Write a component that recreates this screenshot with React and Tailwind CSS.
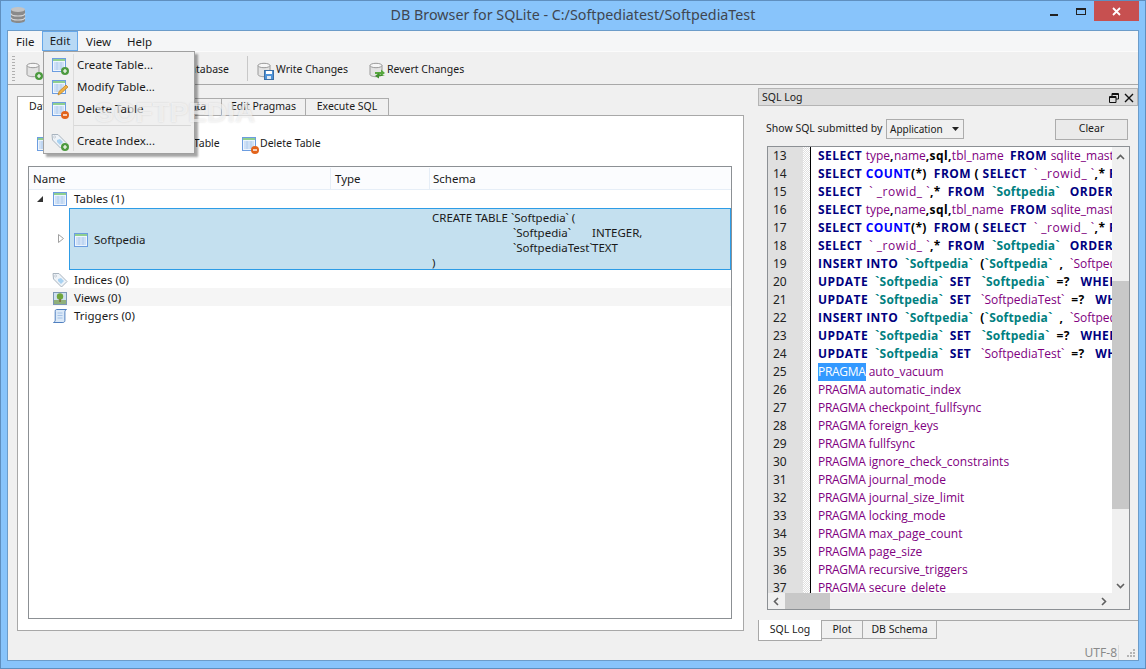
import React from 'react';

const ui = "font-['Noto_Sans','Open_Sans',sans-serif]";

function TableIcon({ className = 'w-4 h-4' }) {
  return (
    <svg viewBox="0 0 16 16" className={className}>
      <rect x="1.5" y="1.5" width="13" height="13" fill="#eef5fd" stroke="#6c9de0" />
      <rect x="2" y="2" width="12" height="2" fill="#8fcf8f" />
      <path d="M3 6h10M3 8h10M3 10h10M3 12h10M6 5v8M10 5v8" stroke="#b0ccee" strokeWidth="1" fill="none" />
    </svg>
  );
}

function PlusBadge() {
  return (
    <svg viewBox="0 0 8 8" className="absolute -right-[2px] -bottom-[2px] w-2 h-2">
      <circle cx="4" cy="4" r="4" fill="#4c9a3f" />
      <path d="M2 4h4M4 2v4" stroke="#fff" strokeWidth="1.2" />
    </svg>
  );
}

function MinusBadge() {
  return (
    <svg viewBox="0 0 8 8" className="absolute -right-[2px] -bottom-[2px] w-2 h-2">
      <circle cx="4" cy="4" r="4" fill="#e2641c" />
      <path d="M2 4h4" stroke="#fff" strokeWidth="1.4" />
    </svg>
  );
}

function DbIcon({ className = 'w-4 h-4' }) {
  return (
    <svg viewBox="0 0 16 16" className={className}>
      <path d="M2 3.5v9c0 1.2 2.7 2.2 6 2.2s6-1 6-2.2v-9z" fill="#e3e3e3" stroke="#9a9a9a" />
      <ellipse cx="8" cy="3.5" rx="6" ry="2.2" fill="#f6f6f6" stroke="#9a9a9a" />
    </svg>
  );
}

function AppIcon() {
  return (
    <svg viewBox="0 0 16 16" className="absolute left-[9px] top-[6px] w-4 h-4">
      <path d="M1 2.5v11C1 15 4 16 8 16s7-1 7-2.5v-11z" fill="#8a8a8a" />
      <ellipse cx="8" cy="2.5" rx="7" ry="2.5" fill="#c4c4c4" />
      <path d="M1 6.5C1 8 4 9 8 9s7-1 7-2.5M1 10.5C1 12 4 13 8 13s7-1 7-2.5" fill="none" stroke="#d8d8d8" strokeWidth="1.2" />
    </svg>
  );
}

function TagIcon() {
  return (
    <svg viewBox="0 0 16 16" className="w-4 h-4">
      <path d="M1 1.5h6l8 8-5.5 5.5-8-8z" fill="#eef3f8" stroke="#a9b4bf" />
      <path d="M6 7l3-1 3 3-3 3-3-3z" fill="#a8d2f2" />
      <circle cx="3.6" cy="4" r="1" fill="#fff" stroke="#a9b4bf" strokeWidth="0.6" />
    </svg>
  );
}

function ViewIcon() {
  return (
    <svg viewBox="0 0 16 16" className="w-4 h-4">
      <rect x="1.5" y="2.5" width="13" height="12" fill="#cfe0ef" stroke="#7c97b5" />
      <rect x="2" y="10" width="12" height="4" fill="#8fb07a" />
      <circle cx="8" cy="6.5" r="3.2" fill="#6fa53c" />
      <rect x="7.4" y="9" width="1.3" height="3" fill="#7a5a34" />
    </svg>
  );
}

function TriggerIcon() {
  return (
    <svg viewBox="0 0 16 16" className="w-4 h-4">
      <path d="M4.5 1.5h10c-1.2 .6-1.6 1.6-1.6 2.6v8.4c0 1.2-.8 2-2 2H1.5c1.2-.5 1.7-1.2 1.7-2.4V3.4c0-1.2.4-1.9 1.3-1.9z" fill="#dbe9f8" stroke="#4f7fbf" />
      <path d="M5.5 5h5M5.5 7.5h5M5.5 10h5" stroke="#a5c2e6" />
    </svg>
  );
}

function Chevron({ d }) {
  return (
    <svg viewBox="0 0 9 9" className="w-[9px] h-[9px]">
      <path d={d} stroke="#606060" strokeWidth="1.6" fill="none" />
    </svg>
  );
}

// code segments: k keyword, f function, p punctuation, i identifier, r rowid, t quoted table
const kinds = {
  k: 'font-bold tracking-[0.45px] text-[#000080]',
  f: 'font-bold tracking-[0.45px] text-[#0000ff]',
  p: 'font-bold tracking-[0.4px] text-black',
  i: 'text-[#800080]',
  r: 'tracking-[0.5px] text-[#800080]',
  t: 'font-bold tracking-[0.2px] text-[#008080]',
};

const sel1 = [['k', 'SELECT '], ['i', 'type'], ['p', ','], ['i', 'name'], ['p', ',sql,'], ['i', 'tbl_name  '], ['k', 'FROM '], ['i', 'sqlite_master']];
const sel2 = [['k', 'SELECT '], ['f', 'COUNT'], ['p', '(*)  '], ['k', 'FROM '], ['p', '( '], ['k', 'SELECT '], ['r', ' ` _rowid_ `'], ['p', ',* '], ['k', 'FROM']];
const sel3 = [['k', 'SELECT '], ['r', ' ` _rowid_ `'], ['p', ',*  '], ['k', 'FROM '], ['t', ' `Softpedia`   '], ['k', 'ORDER BY']];
const ins = [['k', 'INSERT INTO '], ['t', ' `Softpedia`'], ['p', '  ('], ['t', '`Softpedia`'], ['p', '  , '], ['i', ' `SoftpediaTest`']];
const upd1 = [['k', 'UPDATE '], ['t', ' `Softpedia`  '], ['k', 'SET '], ['t', '  `Softpedia`'], ['p', '  =?   '], ['k', 'WHERE']];
const upd2 = [['k', 'UPDATE '], ['t', ' `Softpedia`  '], ['k', 'SET '], ['i', '  `SoftpediaTest`'], ['p', '  =?   '], ['k', 'WHERE']];

const pragmas = [
  'auto_vacuum', 'automatic_index', 'checkpoint_fullfsync', 'foreign_keys', 'fullfsync',
  'ignore_check_constraints', 'journal_mode', 'journal_size_limit', 'locking_mode',
  'max_page_count', 'page_size', 'recursive_triggers', 'secure_delete',
];

const codeLines = [sel1, sel2, sel3, sel1, sel2, sel3, ins, upd1, upd2, ins, upd1, upd2];

function CodeLine({ number, children }) {
  return (
    <div className="flex h-[18px] leading-[18px] shrink-0">
      <div className={`w-[35px] bg-[#e0e0e0] pl-[5px] text-[12px] text-[#222] ${ui}`}>{number}</div>
      <div className="w-[7px] bg-[repeating-conic-gradient(#e0e0e0_0_25%,#ffffff_0_50%)] bg-[length:2px_2px]" />
      <div className="w-px bg-black" />
      <div className="w-[7px]" />
      <div className="flex-1 min-w-0 overflow-hidden whitespace-pre">{children}</div>
    </div>
  );
}

function MenuItem({ icon, label }) {
  return (
    <div className="flex h-[22px] items-center">
      <div className="w-[30px] flex justify-center">{icon}</div>
      <div className="pl-[3px]">{label}</div>
    </div>
  );
}

function SideTab({ label, className }) {
  return (
    <div className={`flex items-center justify-center whitespace-nowrap border border-[#acacac] bg-[#f0f0f0] text-[10.5px] ${className}`}>{label}</div>
  );
}

function TreeRow({ icon, label, className = '' }) {
  return (
    <div className={`flex h-[18px] items-center pl-[23px] ${className}`}>
      {icon}
      <span className="ml-[6px]">{label}</span>
    </div>
  );
}

export default function App() {
  return (
    <div className={`relative w-[1146px] h-[669px] overflow-hidden flex flex-col bg-[#88c4fb] border border-[#5f8fbf] text-[11.5px] text-[#1a1a1a] ${ui}`}>
      {/* title bar */}
      <div className="h-[29px] shrink-0 relative flex items-center justify-center">
        <AppIcon />
        <span className="text-[14.3px] text-[#3f4650] -mt-[1px]">DB Browser for SQLite - C:/Softpediatest/SoftpediaTest</span>
        <div className="absolute right-[6px] top-0 flex items-start">
          <div className="w-[8px] h-[2px] bg-[#222] mt-[13px] mr-[18px]" />
          <div className="w-[10px] h-[7px] border border-[#222] border-t-2 mt-[7px] mr-[8px]" />
          <div className="w-[45px] h-[20px] bg-[#c75050] flex items-center justify-center">
            <svg viewBox="0 0 9 9" className="w-[9px] h-[9px]"><path d="M1 1l7 7M8 1l-7 7" stroke="#fff" strokeWidth="1.8" /></svg>
          </div>
        </div>
      </div>

      <div className="flex-1 min-h-0 mx-[6px] mb-[7px] border border-[#6c9cc9] bg-[#f0f0f0] flex flex-col">
        {/* menu bar */}
        <div className="h-[20px] shrink-0 bg-[#f5f6f7] flex items-center pl-[8px] pt-px">
          <span className="w-[26px]">File</span>
          <span className="w-[36px] h-[20px] -mt-px flex items-center justify-center bg-[#b8d9f5] border border-[#66a7e8]">Edit</span>
          <span className="ml-[8px] w-[41px]">View</span>
          <span>Help</span>
        </div>

        {/* toolbar */}
        <div className="h-[34px] shrink-0 border-t border-[#fbfbfb] border-b border-b-[#a8a8a8] flex items-center pl-[4px] pt-[3px] text-[10.5px]">
          <div className="w-[3px] h-[25px] -mt-[3px] mr-[10px] bg-[repeating-linear-gradient(#b0b0b0_0_1px,transparent_1px_3px)]" />
          <div className="relative w-4 h-4 mr-[83px]">
            <DbIcon />
            <PlusBadge />
          </div>
          <span className="w-[105px] text-right">Open Database</span>
          <div className="w-px h-[25px] -mt-[2px] bg-[#c8c8c8] ml-[18px] mr-[8px]" />
          <div className="relative w-4 h-4 mr-[4px]">
            <DbIcon />
            <svg viewBox="0 0 10 10" className="absolute -right-[2px] -bottom-[2px] w-[10px] h-[10px]">
              <rect x="0.5" y="0.5" width="9" height="9" fill="#4f93d8" stroke="#3a6ea5" />
              <rect x="2" y="1" width="6" height="3" fill="#fff" />
              <rect x="3" y="6" width="4" height="3" fill="#dfe9f3" />
            </svg>
          </div>
          <span className="w-[92px]">Write Changes</span>
          <div className="relative w-4 h-4 mr-[3px]">
            <DbIcon />
            <svg viewBox="0 0 12 12" className="absolute -right-[2px] -bottom-[2px] w-3 h-3">
              <path d="M1 4h6V1.5l4 3.5-4 3V6H1z" fill="#57a83e" />
              <path d="M11 8H5v2.5L1 8l4-3v1" fill="#3f8f2c" />
            </svg>
          </div>
          <span>Revert Changes</span>
        </div>

        <div className="flex-1 min-h-0 flex">
          {/* left column */}
          <div className="w-[750px] shrink-0 pl-[9px] pt-[11px]">
            <div className="flex h-[20px] items-end relative z-10">
              <div className="w-[102px] h-[20px] bg-white border border-[#a8a8a8] border-b-0 flex items-center pl-[11px] whitespace-nowrap text-[10.5px]">Database Structure</div>
              <SideTab label="Browse Data" className="w-[103px] h-[18px] border-l-0 pl-[10px]" />
              <SideTab label="Edit Pragmas" className="w-[84px] h-[18px] border-l-0" />
              <SideTab label="Execute SQL" className="w-[83px] h-[18px] border-l-0" />
            </div>
            <div className="w-[727px] h-[516px] -mt-px bg-white border border-[#a8a8a8] px-[10px] flex flex-col">
              <div className="h-[50px] shrink-0 flex items-center pl-[8px] pt-[6px] text-[10.5px]">
                <div className="relative w-4 h-4">
                  <TableIcon />
                  <PlusBadge />
                </div>
                <span className="ml-[4px] w-[75px]">Create Table</span>
                <div className="relative w-4 h-4 ml-[6px]">
                  <TableIcon />
                </div>
                <span className="ml-[4px] w-[72px]">Modify Table</span>
                <div className="relative w-4 h-4 ml-[12px]">
                  <TableIcon />
                  <MinusBadge />
                </div>
                <span className="ml-[3px]">Delete Table</span>
              </div>

              <div className="h-[453px] w-[704px] border border-[#8c9094] flex flex-col">
                <div className="h-[23px] shrink-0 bg-[#fbfcfe] border-b border-[#e6eef7] grid grid-cols-[302px_99px_1fr] items-center pt-px">
                  <div className="h-full flex items-center pl-[4px] border-r border-[#e6eef7]">Name</div>
                  <div className="h-full flex items-center pl-[4px] border-r border-[#e6eef7]">Type</div>
                  <div className="h-full flex items-center pl-[3px]">Schema</div>
                </div>
                <TreeRow
                  label="Tables (1)"
                  icon={
                    <span className="relative w-4 h-4">
                      <svg viewBox="0 0 6 6" className="absolute -left-[15px] top-[5px] w-[6px] h-[6px]"><path d="M6 0v6H0z" fill="#333" /></svg>
                      <TableIcon />
                    </span>
                  }
                />
                <div className="h-[62px] flex shrink-0">
                  <div className="w-[40px] relative">
                    <svg viewBox="0 0 6 9" className="absolute left-[29px] top-[26px] w-[6px] h-[9px]"><path d="M.5.5l5 4-5 4z" fill="#fff" stroke="#a0a0a0" /></svg>
                  </div>
                  <div className="flex-1 bg-[#c4e0ef] border border-[#2d9ce6] grid grid-cols-[360px_1fr]">
                    <div className="flex items-center pl-[3px]">
                      <TableIcon />
                      <span className="ml-[5px]">Softpedia</span>
                    </div>
                    <div className="pl-[2px] leading-[15px] pt-px">
                      <div>CREATE TABLE `Softpedia` (</div>
                      <div className="grid grid-cols-[79px_auto] pl-[81px]">
                        <span>`Softpedia`</span><span>INTEGER,</span>
                        <span>`SoftpediaTest`</span><span>TEXT</span>
                      </div>
                      <div>)</div>
                    </div>
                  </div>
                </div>
                <TreeRow label="Indices (0)" icon={<TagIcon />} className="pt-px" />
                <TreeRow label="Views (0)" icon={<ViewIcon />} className="bg-[#f5f5f5] pt-px" />
                <TreeRow label="Triggers (0)" icon={<TriggerIcon />} className="pt-px" />
              </div>
            </div>
          </div>

          {/* SQL log dock */}
          <div className="w-[380px] shrink-0 pt-[3px] flex flex-col">
            <div className="h-[18px] shrink-0 bg-[#dcdcdc] border border-[#b4b4b4] flex items-center pl-[3px] pr-[3px] pt-px">
              <span className="flex-1 text-[10.5px]">SQL Log</span>
              <svg viewBox="0 0 10 10" className="w-[10px] h-[10px] mr-[5px]">
                <path d="M3 3V.5h6.5V6H7M.5 3.5H7v6H.5z" fill="none" stroke="#111" />
                <path d="M3 1.5h6.5M.5 4.5H7" stroke="#111" />
              </svg>
              <svg viewBox="0 0 10 10" className="w-[10px] h-[10px]">
                <path d="M1 1l8 8M9 1l-8 8" stroke="#111" strokeWidth="1.4" />
              </svg>
            </div>
            <div className="flex items-center h-[22px] mt-[12px] ml-[8px] shrink-0 text-[10.5px]">
              <span className="w-[120px] whitespace-nowrap">Show SQL submitted by</span>
              <div className="w-[78px] h-[20px] border border-[#acacac] bg-[#f0f0f0] flex items-center pl-[3px]">
                <span className="flex-1 text-[10px]">Application</span>
                <svg viewBox="0 0 7 4" className="w-[7px] h-[4px] mr-[4px] shrink-0"><path d="M0 0h7L3.5 4z" fill="#222" /></svg>
              </div>
              <div className="w-[73px] h-[21px] ml-[91px] border border-[#acacac] bg-[#eaeaea] flex items-center justify-center">Clear</div>
            </div>

            <div className="w-[363px] h-[464px] mt-[6px] ml-[9px] shrink-0 border border-[#8c9094] bg-[#f0f0f0] flex flex-col">
              <div className="flex-1 min-h-0 flex">
                <div className="flex-1 min-w-0 bg-white flex flex-col overflow-hidden text-[12px] font-['Open_Sans',sans-serif]">
                  {codeLines.map((segs, i) => (
                    <CodeLine key={i} number={13 + i}>
                      {segs.map(([k, t], j) => <span key={j} className={kinds[k]}>{t}</span>)}
                    </CodeLine>
                  ))}
                  {pragmas.map((p, i) => (
                    <CodeLine key={p} number={25 + i}>
                      <span className={`tracking-[-0.3px] ${i === 0 ? 'bg-[#3399ff] text-white inline-block h-[18px]' : 'text-[#800080]'}`}>PRAGMA</span>
                      <span className="text-[#800080]"> {p}</span>
                    </CodeLine>
                  ))}
                </div>
                <div className="w-[17px] shrink-0 flex flex-col items-center">
                  <div className="h-[16px] flex items-center mt-[2px]"><Chevron d="M1 6l3.5-3.5L8 6" /></div>
                  <div className="h-[116px]" />
                  <div className="w-full h-[228px] bg-[#c8c8c8]" />
                  <div className="flex-1" />
                  <div className="h-[16px] flex items-center"><Chevron d="M1 3l3.5 3.5L8 3" /></div>
                </div>
              </div>
              <div className="h-[16px] shrink-0 flex items-center">
                <div className="w-[17px] flex justify-center"><Chevron d="M6 1L2.5 4.5 6 8" /></div>
                <div className="w-[45px] h-full bg-[#c8c8c8]" />
                <div className="flex-1" />
                <div className="w-[17px] flex justify-center mr-[17px]"><Chevron d="M3 1l3.5 3.5L3 8" /></div>
              </div>
            </div>

            <div className="mt-[10px] border-t border-[#a8a8a8] flex items-start h-[23px] shrink-0">
              <div className="w-[64px] h-[21px] -mt-px bg-white border border-t-0 border-[#a8a8a8] flex items-center justify-center text-[10.5px]">SQL Log</div>
              <SideTab label="Plot" className="w-[41px] h-[18px] border-t-0 border-l-0" />
              <SideTab label="DB Schema" className="w-[74px] h-[18px] border-t-0 border-l-0" />
            </div>
          </div>
        </div>

        {/* status bar */}
        <div className="h-[18px] shrink-0 flex items-center justify-end pr-[3px] pt-[3px]">
          <span className="text-[#8a8a8a] text-[12px]">UTF-8</span>
          <div className="w-px h-[15px] bg-[#dcdcdc] ml-[1px] mr-[8px]" />
          <svg viewBox="0 0 8 8" className="w-2 h-2">
            <path d="M6 0h2v2H6zM3 3h2v2H3zM6 3h2v2H6zM0 6h2v2H0zM3 6h2v2H3zM6 6h2v2H6z" fill="#b4b4b4" />
          </svg>
        </div>
      </div>

      {/* Edit menu popup */}
      <div className="absolute left-[42px] top-[50px] w-[152px] h-[103px] bg-[#f0f0f0] border border-[#a0a0a0] shadow-[3px_3px_2px_rgba(0,0,0,0.35)] z-20">
        <div className="absolute left-[29px] top-[2px] bottom-[2px] w-px bg-[#dcdcdc]" />
        <div className="pt-[2px]">
          <MenuItem label="Create Table..." icon={<span className="relative w-4 h-4"><TableIcon /><PlusBadge /></span>} />
          <MenuItem
            label="Modify Table..."
            icon={
              <span className="relative w-4 h-4">
                <TableIcon />
                <svg viewBox="0 0 12 12" className="absolute -right-[2px] -bottom-[1px] w-3 h-3">
                  <path d="M1 11l1-3.5L9 1l2 2-7 6.5z" fill="#f0b040" stroke="#b87a1e" strokeWidth="0.7" />
                </svg>
              </span>
            }
          />
          <MenuItem label="Delete Table" icon={<span className="relative w-4 h-4"><TableIcon /><MinusBadge /></span>} />
          <div className="h-px bg-[#d8d8d8] ml-[30px] mr-[3px] mt-[5px] mb-[4px]" />
          <MenuItem label="Create Index..." icon={<span className="relative w-4 h-4"><TagIcon /><PlusBadge /></span>} />
        </div>
      </div>

      {/* download site watermark */}
      <div className="absolute left-[94px] top-[91px] z-30 text-[28px] font-bold text-white/60 [text-shadow:0_0_2px_rgba(120,120,120,0.25)] font-['Liberation_Sans',sans-serif] pointer-events-none">
        SOFTPEDIA
      </div>
    </div>
  );
}
